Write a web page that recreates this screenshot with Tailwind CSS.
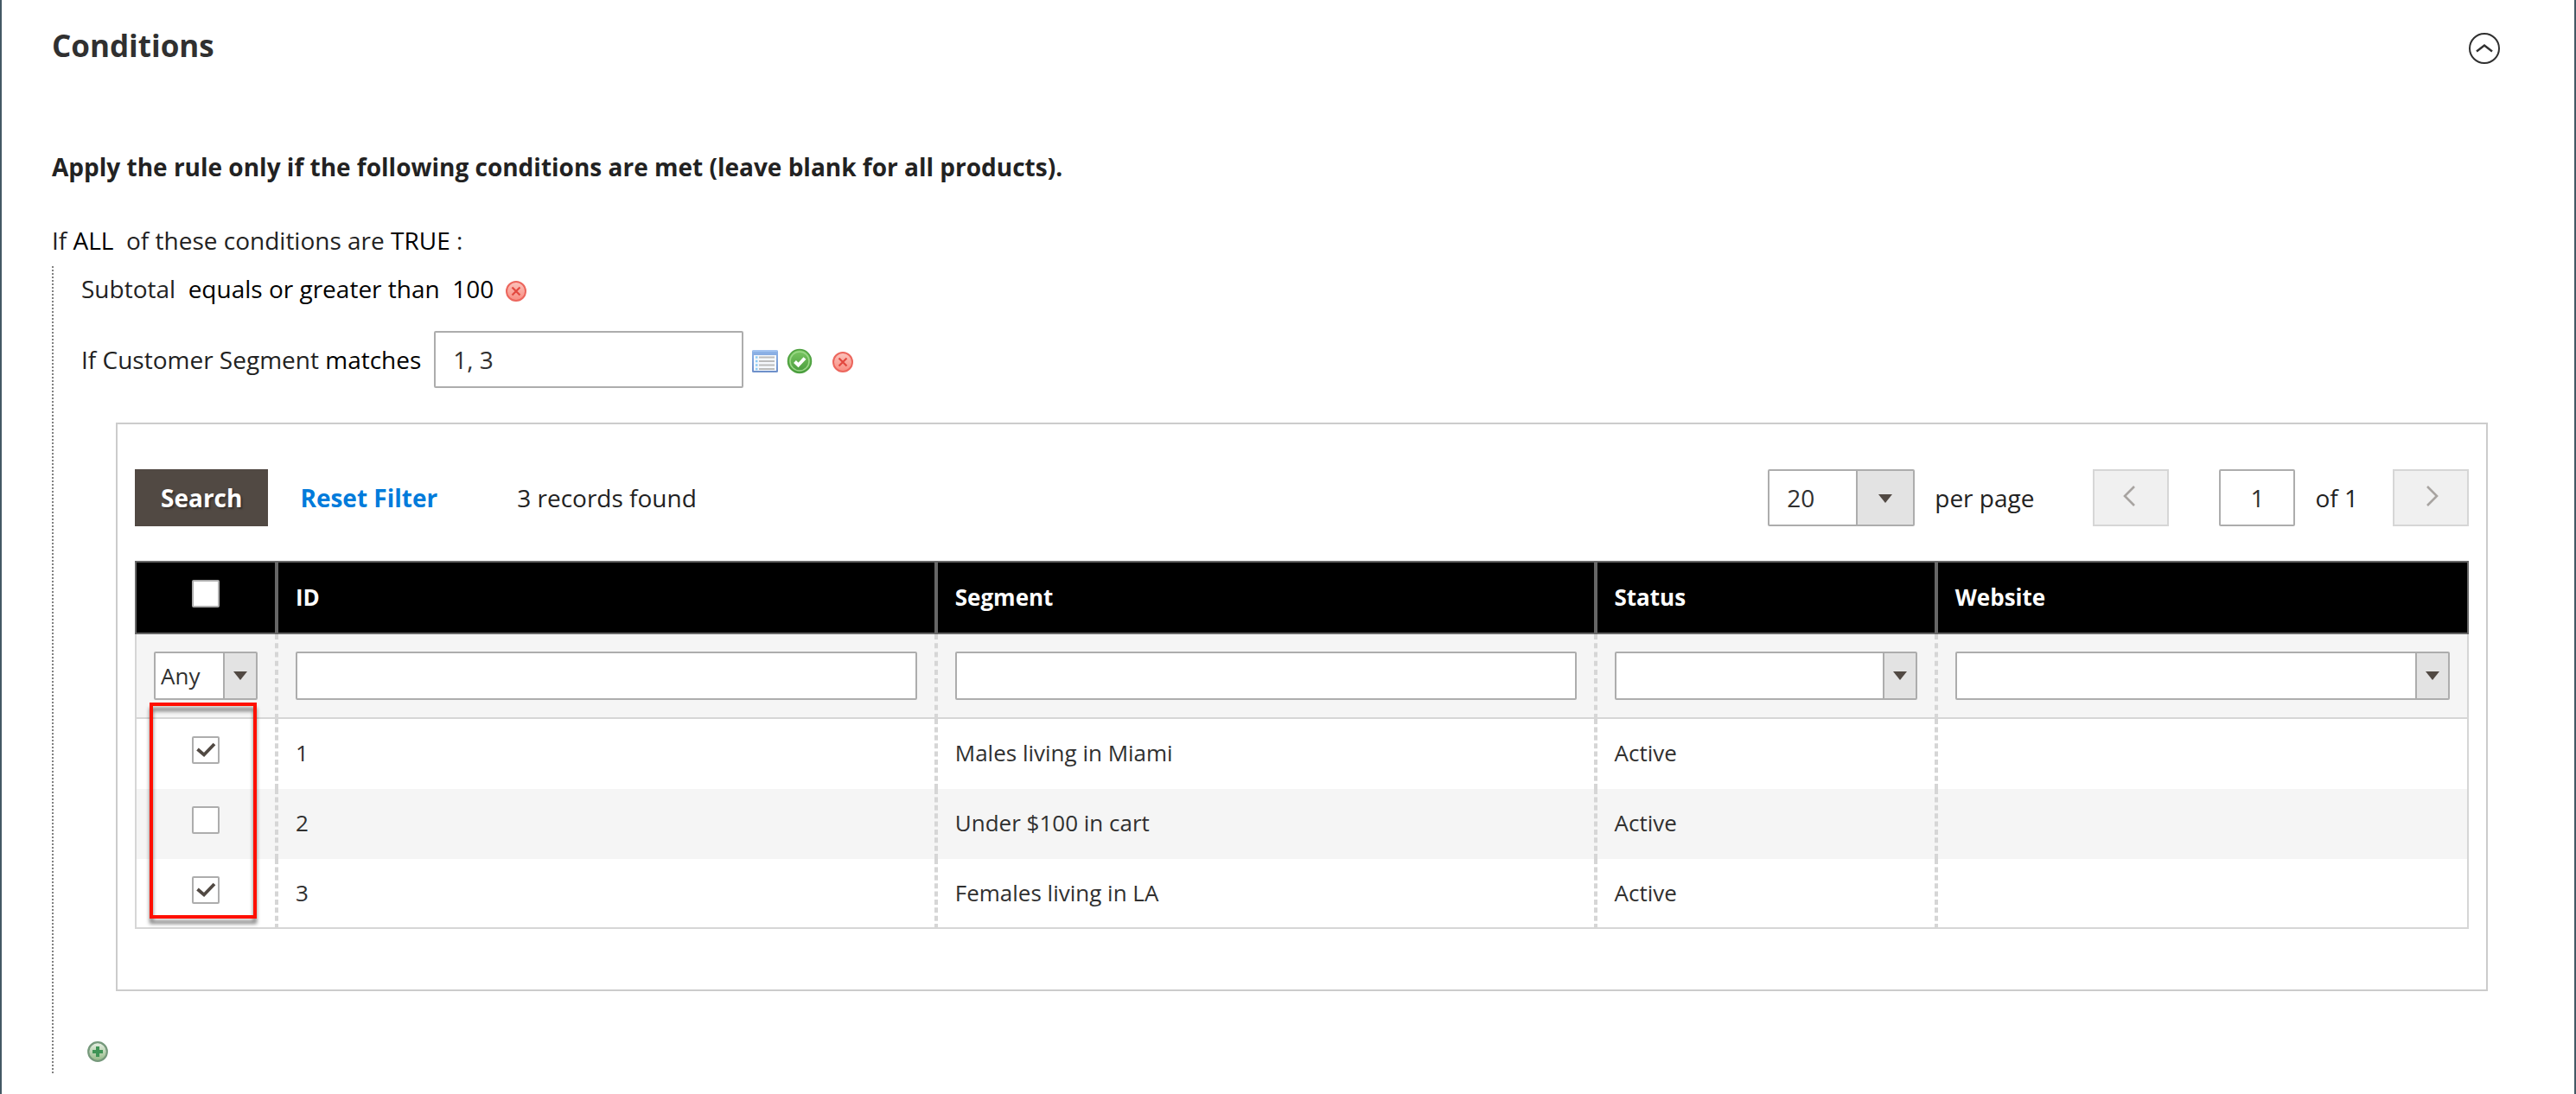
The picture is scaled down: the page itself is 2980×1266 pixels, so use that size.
<!DOCTYPE html>
<html lang="en">
<head>
<meta charset="utf-8">
<title>Conditions</title>
<script src="https://cdn.jsdelivr.net/npm/@tailwindcss/browser@4"></script>
</head>
<body class="min-h-screen border-x-2 border-[#435964] bg-white font-['Open_Sans',sans-serif] text-[28px] leading-[38px] text-[#222]">
<svg class="absolute h-0 w-0" aria-hidden="true">
  <defs>
    <linearGradient id="redFill" x1="0" y1="0" x2="0" y2="1"><stop offset="0" stop-color="#fbc4bd"/><stop offset="1" stop-color="#f98c80"/></linearGradient>
    <linearGradient id="greenFill" x1="0" y1="0" x2="0" y2="1"><stop offset="0" stop-color="#7cc963"/><stop offset="1" stop-color="#479a3c"/></linearGradient>
    <linearGradient id="blueFill" x1="0" y1="0" x2="0" y2="1"><stop offset="0" stop-color="#8fb5e9"/><stop offset="1" stop-color="#6d8fc9"/></linearGradient>
    <linearGradient id="addFill" x1="0" y1="0" x2="0" y2="1"><stop offset="0" stop-color="#e9f1e6"/><stop offset="1" stop-color="#93b985"/></linearGradient>
    <symbol id="remove" viewBox="0 0 24 24"><circle cx="12" cy="12" r="11" fill="url(#redFill)" stroke="#ec665d" stroke-width="2"/><path d="M7.500 7.500l9 9m0-9l-9 9" stroke="#e2483f" stroke-width="2.200" fill="none"/></symbol>
    <symbol id="check" viewBox="0 0 32 32"><path d="M6.500 15l7.500 6.500L26 9" fill="none" stroke="#514943" stroke-width="3.800"/></symbol>
    <symbol id="caret" viewBox="0 0 16 10"><path d="M0 0h16l-8 10z" fill="#514943"/></symbol>
  </defs>
</svg>
<main class="pt-[30px] pr-[86px] pb-5 pl-[58px]">
  <header class="flex items-center justify-between">
    <h2 class="text-[35px] leading-[46px] font-bold text-[#303030]">Conditions</h2>
    <button type="button" aria-label="Collapse section" class="mt-1.5 h-9 w-9">
      <svg viewBox="0 0 36 36" class="h-9 w-9" fill="none" stroke="#303030" stroke-width="2"><circle cx="18" cy="18" r="17"/><path d="M9 21.500l9-7 9 7" stroke-width="2.400"/></svg>
    </button>
  </header>
  <p class="mt-[98px] font-bold">Apply the rule only if the following conditions are met (leave blank for all products).</p>
  <p class="mt-[47px]">If <a href="#" class="text-black">ALL</a>&nbsp; of these conditions are <a href="#" class="text-black">TRUE</a> :</p>

  <div class="mt-[11px] flex">
    <div class="w-0.5 shrink-0 bg-[repeating-linear-gradient(to_bottom,#808080_0_2px,transparent_2px_4px)]"></div>
    <div class="min-w-0 flex-1 pl-8">
      <div class="flex items-center pt-[7px]">
        <p>Subtotal&nbsp; <a href="#" class="text-black">equals or greater than</a>&nbsp; <a href="#" class="text-black">100</a></p>
        <button type="button" aria-label="Remove" class="mt-1.5 ml-3.5 h-6 w-6"><svg class="h-6 w-6"><use href="#remove"/></svg></button>
      </div>
      <div class="mt-[30px] flex h-[66px] items-center">
        <label for="segments">If Customer Segment <span class="text-black">matches</span></label>
        <input id="segments" type="text" value="1, 3" class="ml-[15px] h-full w-[358px] rounded-xs border-2 border-[#adadad] bg-white px-5 text-[#303030]">
        <button type="button" aria-label="Open chooser" class="mt-1 ml-[9px] h-7 w-8">
          <svg class="h-7 w-8" viewBox="0 0 32 28"><rect x="1" y="1" width="30" height="26" rx="1.500" fill="url(#blueFill)"/><path d="M2 2h28" stroke="#a9c8f3" stroke-width="1.500"/><rect x="3" y="7" width="26" height="18" fill="#f5f8fc"/><path d="M9 9.500h18M9 14h18M9 18.500h18M9 23h18" stroke="#bbb" stroke-width="2"/><path d="M5 9.500h2.500M5 14h2.500M5 18.500h2.500M5 23h2.500" stroke="#8ccbf5" stroke-width="2.400"/></svg>
        </button>
        <button type="button" aria-label="Apply" class="mt-1 ml-[9px] h-[30px] w-[30px]">
          <svg class="h-[30px] w-[30px]" viewBox="0 0 30 30"><circle cx="15" cy="15" r="13.500" fill="url(#greenFill)" stroke="#4da03f" stroke-width="1.500"/><circle cx="15" cy="15" r="11" fill="none" stroke="#9bd887" stroke-width="1.500"/><path d="M9.500 15.500l4 4 7.500-8" fill="none" stroke="#fff" stroke-width="4"/></svg>
        </button>
        <button type="button" aria-label="Remove" class="mt-1.5 ml-[23px] h-6 w-6"><svg class="h-6 w-6"><use href="#remove"/></svg></button>
      </div>

      <section class="mt-10 mr-[14px] ml-10 border-2 border-[#ccc] px-5 pt-[52px] pb-[70px]">
        <div class="flex h-[66px] items-center">
          <button type="button" class="h-full bg-[#514943] px-[30px] font-bold text-white [text-shadow:2px_2px_2px_rgba(0,0,0,.35)]">Search</button>
          <button type="button" class="ml-[37px] font-bold text-[#007bdb]">Reset Filter</button>
          <span class="ml-[92px]">3 records found</span>
          <div class="relative ml-auto h-full w-[170px]">
            <select id="limit" class="h-full w-full appearance-none rounded-xs border-2 border-[#adadad] bg-white pl-5 text-[#303030]"><option>20</option></select>
            <span class="pointer-events-none absolute inset-y-0.5 right-0.5 flex w-[66px] items-center justify-center border-l-2 border-[#adadad] bg-[#e3e3e3]"><svg class="mt-0.5 h-2.5 w-4"><use href="#caret"/></svg></span>
          </div>
          <label for="limit" class="ml-[23px]">per page</label>
          <button type="button" aria-label="Previous page" class="ml-[68px] flex h-full w-[88px] items-center justify-center border-2 border-[#d6d6d6] bg-[#f0f0f0]"><svg class="mr-1 mb-1 h-6 w-4" viewBox="0 0 16 24" fill="none" stroke="#a8a4a1" stroke-width="2.600"><path d="M14 1L3 12l11 11"/></svg></button>
          <input id="page" type="text" value="1" class="ml-[58px] h-full w-[88px] rounded-xs border-2 border-[#adadad] text-center text-[#303030]">
          <label for="page" class="ml-[23px]">of 1</label>
          <button type="button" aria-label="Next page" class="ml-10 flex h-full w-[88px] items-center justify-center border-2 border-[#d6d6d6] bg-[#f0f0f0]"><svg class="mb-1 ml-1 h-6 w-4" viewBox="0 0 16 24" fill="none" stroke="#a8a4a1" stroke-width="2.600"><path d="M2 1l11 11L2 23"/></svg></button>
        </div>

        <div class="relative mt-10">
          <table class="w-full table-fixed border-separate border-spacing-0 text-[26px] text-[#303030]">
            <colgroup><col class="w-[164px]"><col class="w-[28.25%]"><col class="w-[28.25%]"><col class="w-[14.6%]"><col></colgroup>
            <thead class="bg-black text-left align-top leading-10 text-white">
              <tr class="h-[85px] [&>th]:border-2 [&>th]:border-[#666] [&>th]:px-5 [&>th]:pt-5 [&>th]:font-bold">
                <th scope="col"><input type="checkbox" aria-label="Select all" class="mx-auto block h-8 w-8 appearance-none rounded-xs border-2 border-[#adadad] bg-white"></th>
                <th scope="col">ID</th><th scope="col">Segment</th><th scope="col">Status</th><th scope="col">Website</th>
              </tr>
            </thead>
            <tbody class="align-top [&_td]:border-x-2 [&_td]:border-dashed [&_td]:border-[#d6d6d6] [&_td]:px-5 [&_td]:pt-5 [&_td:first-child]:[border-left-style:solid] [&_td:last-child]:[border-right-style:solid]">
              <tr class="h-[98px] bg-[#f5f5f5] [&>td]:border-b-2 [&>td]:[border-bottom-style:solid]">
                <td><div class="relative h-14">
                  <select aria-label="Selected" class="h-full w-full appearance-none rounded-xs border-2 border-[#adadad] bg-white pl-1.5"><option>Any</option></select>
                  <span class="pointer-events-none absolute inset-y-0.5 right-0.5 flex w-[38px] items-center justify-center border-l-2 border-[#adadad] bg-[#e3e3e3]"><svg class="h-2.5 w-4"><use href="#caret"/></svg></span>
                </div></td>
                <td><input type="text" aria-label="ID" class="block h-14 w-full rounded-xs border-2 border-[#adadad] bg-white px-2"></td>
                <td><input type="text" aria-label="Segment" class="block h-14 w-full rounded-xs border-2 border-[#adadad] bg-white px-2"></td>
                <td><div class="relative h-14">
                  <select aria-label="Status" class="h-full w-full appearance-none rounded-xs border-2 border-[#adadad] bg-white pl-1.5"><option></option></select>
                  <span class="pointer-events-none absolute inset-y-0.5 right-0.5 flex w-[38px] items-center justify-center border-l-2 border-[#adadad] bg-[#e3e3e3]"><svg class="h-2.5 w-4"><use href="#caret"/></svg></span>
                </div></td>
                <td><div class="relative h-14">
                  <select aria-label="Website" class="h-full w-full appearance-none rounded-xs border-2 border-[#adadad] bg-white pl-1.5"><option></option></select>
                  <span class="pointer-events-none absolute inset-y-0.5 right-0.5 flex w-[38px] items-center justify-center border-l-2 border-[#adadad] bg-[#e3e3e3]"><svg class="h-2.5 w-4"><use href="#caret"/></svg></span>
                </div></td>
              </tr>
              <tr class="h-[81px]">
                <td><label class="relative mx-auto block h-8 w-8"><input type="checkbox" checked aria-label="Males living in Miami" class="peer block h-8 w-8 appearance-none rounded-xs border-2 border-[#adadad] bg-white"><svg class="absolute inset-0 hidden h-8 w-8 peer-checked:block"><use href="#check"/></svg></label></td>
                <td>1</td><td>Males living in Miami</td><td>Active</td><td></td>
              </tr>
              <tr class="h-[81px] bg-[#f5f5f5]">
                <td><label class="relative mx-auto block h-8 w-8"><input type="checkbox" aria-label="Under $100 in cart" class="peer block h-8 w-8 appearance-none rounded-xs border-2 border-[#adadad] bg-white"><svg class="absolute inset-0 hidden h-8 w-8 peer-checked:block"><use href="#check"/></svg></label></td>
                <td>2</td><td>Under $100 in cart</td><td>Active</td><td></td>
              </tr>
              <tr class="h-[81px] [&>td]:border-b-2 [&>td]:[border-bottom-style:solid]">
                <td><label class="relative mx-auto block h-8 w-8"><input type="checkbox" checked aria-label="Females living in LA" class="peer block h-8 w-8 appearance-none rounded-xs border-2 border-[#adadad] bg-white"><svg class="absolute inset-0 hidden h-8 w-8 peer-checked:block"><use href="#check"/></svg></label></td>
                <td>3</td><td>Females living in LA</td><td>Active</td><td></td>
              </tr>
            </tbody>
          </table>
          <div class="pointer-events-none absolute top-[164px] left-[17px] h-[250px] w-[124px] border-4 border-[#ff0f00] drop-shadow-[0_6px_2px_rgba(0,0,0,0.5)]"></div>
        </div>
      </section>

      <div class="pt-[58px] pb-[14px] pl-[7px]">
        <button type="button" aria-label="Add condition" class="block h-6 w-6"><svg class="h-6 w-6" viewBox="0 0 24 24"><circle cx="12" cy="12" r="10.800" fill="url(#addFill)" stroke="#76997c" stroke-width="2.200"/><path d="M12 6v12M6 12h12" stroke="#3f9455" stroke-width="4"/></svg></button>
      </div>
    </div>
  </div>
</main>
</body>
</html>
